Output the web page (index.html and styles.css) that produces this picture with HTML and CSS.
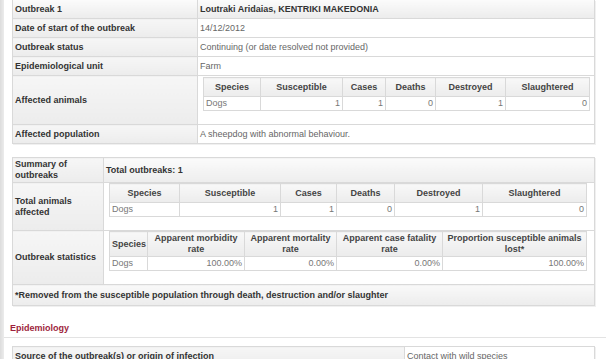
FILE: index.html
```html
<!DOCTYPE html>
<html lang="en">
<head>
<meta charset="utf-8">
<title>Outbreak report</title>
<link rel="stylesheet" href="styles.css">
</head>
<body>
<div class="page">
  <div class="rail"></div>
  <div class="content">

    <table class="record record-top">
      <colgroup><col class="col-label-a"><col></colgroup>
      <tr class="head-row">
        <th>Outbreak 1</th>
        <th>Loutraki Aridaias, KENTRIKI MAKEDONIA</th>
      </tr>
      <tr><th>Date of start of the outbreak</th><td>14/12/2012</td></tr>
      <tr><th>Outbreak status</th><td>Continuing (or date resolved not provided)</td></tr>
      <tr><th>Epidemiological unit</th><td>Farm</td></tr>
      <tr>
        <th>Affected animals</th>
        <td class="nest">
          <table class="grid">
            <colgroup>
              <col style="width:57px"><col style="width:82px"><col style="width:43px">
              <col style="width:50px"><col style="width:70px"><col style="width:84px">
            </colgroup>
            <tr><th>Species</th><th>Susceptible</th><th>Cases</th><th>Deaths</th><th>Destroyed</th><th>Slaughtered</th></tr>
            <tr><td>Dogs</td><td class="num">1</td><td class="num">1</td><td class="num">0</td><td class="num">1</td><td class="num">0</td></tr>
          </table>
        </td>
      </tr>
      <tr><th>Affected population</th><td>A sheepdog with abnormal behaviour.</td></tr>
    </table>

    <table class="record record-summary">
      <colgroup><col class="col-label-b"><col></colgroup>
      <tr class="summary-row">
        <th>Summary of outbreaks</th>
        <th class="shaded">Total outbreaks: 1</th>
      </tr>
      <tr>
        <th>Total animals affected</th>
        <td class="nest">
          <table class="grid">
            <colgroup>
              <col style="width:70px"><col style="width:101px"><col style="width:56px">
              <col style="width:58px"><col style="width:88px"><col style="width:104px">
            </colgroup>
            <tr><th>Species</th><th>Susceptible</th><th>Cases</th><th>Deaths</th><th>Destroyed</th><th>Slaughtered</th></tr>
            <tr><td>Dogs</td><td class="num">1</td><td class="num">1</td><td class="num">0</td><td class="num">1</td><td class="num">0</td></tr>
          </table>
        </td>
      </tr>
      <tr>
        <th>Outbreak statistics</th>
        <td class="nest">
          <table class="grid grid-stats">
            <colgroup>
              <col style="width:38px"><col style="width:97px"><col style="width:92px">
              <col style="width:106px"><col style="width:144px">
            </colgroup>
            <tr>
              <th>Species</th>
              <th>Apparent morbidity rate</th>
              <th>Apparent mortality rate</th>
              <th>Apparent case fatality rate</th>
              <th>Proportion susceptible animals lost*</th>
            </tr>
            <tr><td>Dogs</td><td class="num">100.00%</td><td class="num">0.00%</td><td class="num">0.00%</td><td class="num">100.00%</td></tr>
          </table>
        </td>
      </tr>
      <tr class="note-row">
        <th colspan="2">*Removed from the susceptible population through death, destruction and/or slaughter</th>
      </tr>
    </table>

    <h2 class="section-title">Epidemiology</h2>

    <table class="record record-epi">
      <colgroup><col class="col-label-c"><col></colgroup>
      <tr><th>Source of the outbreak(s) or origin of infection</th><td>Contact with wild species</td></tr>
    </table>

  </div>
</div>
</body>
</html>
```

FILE: styles.css
```css
html, body {
  margin: 0;
  padding: 0;
  background: #ffffff;
}

body {
  font-family: "Liberation Sans", Arial, Helvetica, sans-serif;
  font-size: 9px;
  color: #333333;
  overflow: hidden;
}

.page {
  display: flex;
  min-height: 359px;
}

/* thin grey rail along the left edge of the page */
.rail {
  flex: 0 0 4px;
  background: linear-gradient(to right, #dcdcdc, #ececec);
}

.content {
  flex: 1;
  min-width: 0;
}

/* outer record tables */
.record {
  border-collapse: collapse;
  table-layout: fixed;
  width: 583px;
  margin-left: 8px;
  box-shadow: 1px 1px 0 #f0f0f0;
}

.record > tbody > tr > th,
.record > tbody > tr > td {
  border: 1px solid #d9d9d9;
  padding: 0 2px;
  height: 18px;
  line-height: 11px;
  vertical-align: middle;
  text-align: left;
}

.record th {
  font-weight: bold;
  color: #333333;
  background: linear-gradient(#f6f6f6, #ececec);
}

.record td {
  color: #666666;
  background: #ffffff;
}

.col-label-a { width: 185px; }
.col-label-b { width: 91px; }
.col-label-c { width: 392px; }

.record-top .head-row th {
  border-top: 0;
  height: 18px;
  background: linear-gradient(#fbfbfb, #ececec);
}

.record-summary {
  margin-top: 13px;
}

.record-summary .summary-row th {
  height: 24px;
}

.record-summary th.shaded {
  background: linear-gradient(#fbfbfb, #ededed);
}

.record .nest {
  padding: 1px 7px 13px 5px;
  vertical-align: top;
}

.record-summary .nest {
  padding-top: 0;
}

.record .note-row th {
  height: 20px;
  background: linear-gradient(#f9f9f9, #ececec);
}

/* nested data grids */
.grid {
  border-collapse: collapse;
  table-layout: fixed;
  width: 100%;
}

.grid th,
.grid td {
  border: 1px solid #d9d9d9;
  padding: 0 2px;
  line-height: 11px;
}

.grid th {
  height: 18px;
  text-align: center;
  font-weight: bold;
  color: #444444;
  background: linear-gradient(#f8f8f8, #ececec);
}

.grid td {
  height: 13px;
  color: #777777;
  background: #ffffff;
  text-align: left;
}

.grid td.num {
  text-align: right;
}

.grid-stats th {
  height: 24px;
}

.section-title {
  margin: 17px 0 8px 0;
  padding: 0 0 3px 6px;
  font-size: 9px;
  line-height: 11px;
  font-weight: bold;
  color: #9e1f3d;
  border-bottom: 1px solid #e3e3e3;
}
```
